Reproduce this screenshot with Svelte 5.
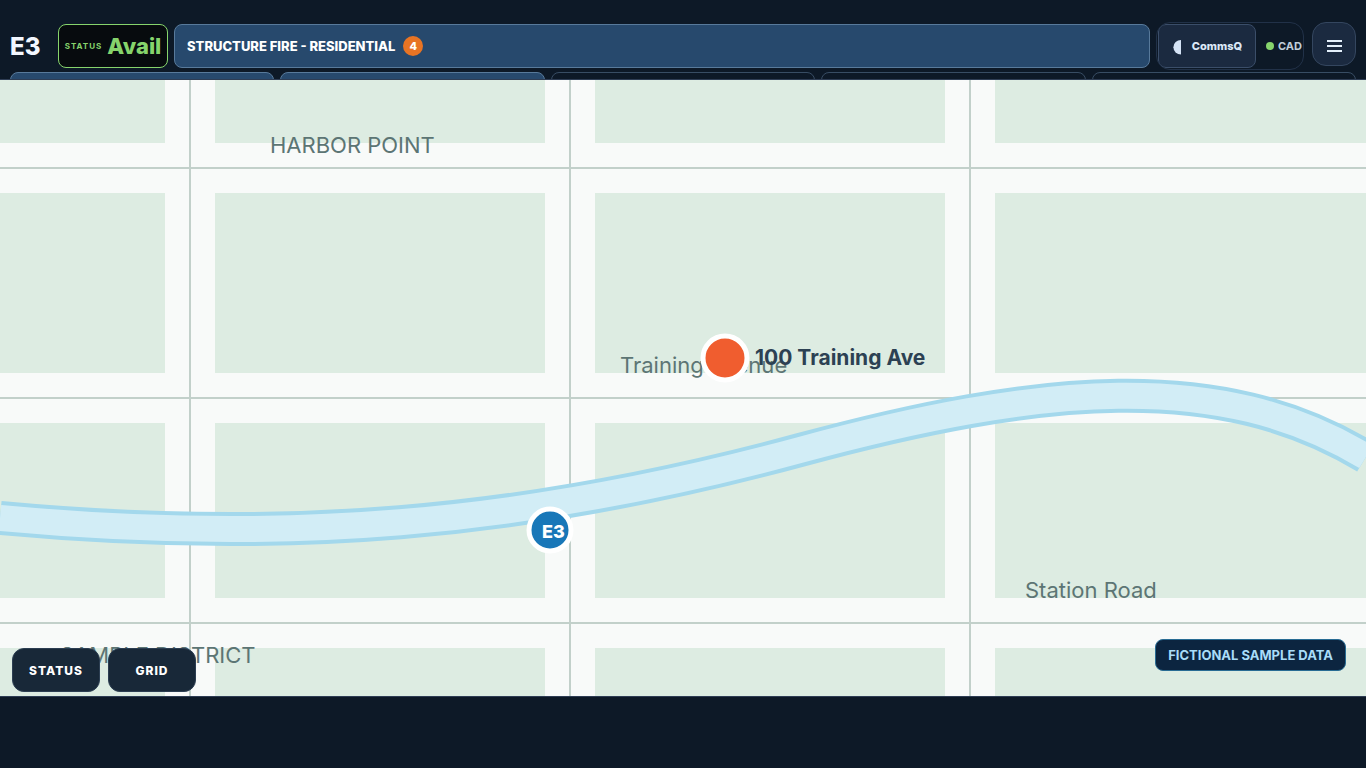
<script lang="ts">
  const unit = 'E3';
  const incident = { title: 'STRUCTURE FIRE - RESIDENTIAL', count: 4 };

  const queue = [
    { id: 1, active: true },
    { id: 2, active: true },
    { id: 3, active: false },
    { id: 4, active: false },
    { id: 5, active: false }
  ];

  const streetsX = [190, 570, 970];
  const streetsY = [88, 318, 543];
  const river = 'M0 438 C280 464 520 446 800 370 C1040 305 1220 288 1366 377';

  const labels = [
    { text: 'HARBOR POINT', x: 270, y: 73 },
    { text: 'Training Avenue', x: 620, y: 293 },
    { text: 'Station Road', x: 1025, y: 518 },
    { text: 'SAMPLE DISTRICT', x: 60, y: 583 }
  ];
</script>

<div class="terminal">
  <header class="topbar">
    <div class="topbar-row">
      <strong class="unit">{unit}</strong>
      <button class="status">
        <span class="status-label">STATUS</span>
        <span class="status-value">Avail</span>
      </button>
      <button class="incident">
        {incident.title}
        <span class="count">{incident.count}</span>
      </button>
      <div class="links">
        <button class="comms">
          <svg width="10" height="16" viewBox="0 0 10 16" aria-hidden="true">
            <path d="M9 1 V15.5 A7.6 7.25 0 0 1 9 1 Z" fill="#d5e3f5" />
          </svg>
          CommsQ
        </button>
        <span class="cad"><i class="dot"></i>CAD</span>
      </div>
      <button class="menu" aria-label="Menu">
        <svg width="16" height="18" viewBox="0 0 16 18" aria-hidden="true">
          <path d="M1 6 H16 M1 11 H16 M1 16 H16" stroke="#e4f0fb" stroke-width="2" />
        </svg>
      </button>
    </div>
    <div class="queue">
      {#each queue as slot (slot.id)}
        <div class="slot" class:active={slot.active}></div>
      {/each}
    </div>
  </header>

  <main class="map">
    <svg class="map-canvas" viewBox="0 0 1366 616" preserveAspectRatio="xMidYMid slice">
      <rect width="1366" height="616" fill="#ddece2" />
      <g stroke="#f8faf9" stroke-width="50">
        {#each streetsX as x}
          <line x1={x} y1="0" x2={x} y2="616" />
        {/each}
        {#each streetsY as y}
          <line x1="0" y1={y} x2="1366" y2={y} />
        {/each}
      </g>
      <g stroke="#c2d0ca" stroke-width="2">
        {#each streetsX as x}
          <line x1={x} y1="0" x2={x} y2="616" />
        {/each}
        {#each streetsY as y}
          <line x1="0" y1={y} x2="1366" y2={y} />
        {/each}
      </g>
      <path d={river} fill="none" stroke="#a3d8ec" stroke-width="34" />
      <path d={river} fill="none" stroke="#d2edf6" stroke-width="26" />
      {#each labels as label}
        <text class="place" x={label.x} y={label.y}>{label.text}</text>
      {/each}
      <circle cx="725" cy="278" r="22" fill="#f05d2f" stroke="#fff" stroke-width="5" />
      <text class="address" x="755" y="285">100 Training Ave</text>
      <circle cx="550" cy="450" r="21" fill="#1877b8" stroke="#fff" stroke-width="5" />
      <text class="marker" x="542" y="458">{unit}</text>
    </svg>

    <div class="map-actions">
      <button>STATUS</button>
      <button>GRID</button>
    </div>
    <div class="notice">FICTIONAL SAMPLE DATA</div>
  </main>

  <footer class="bottombar"></footer>
</div>

<style>
  :global(body) {
    margin: 0;
    background: #0d1927;
    color: #f2f7ff;
    font-family: Inter, Roboto, 'Liberation Sans', sans-serif;
  }

  button {
    font-family: inherit;
    color: inherit;
    cursor: pointer;
    box-sizing: border-box;
  }

  .terminal {
    display: flex;
    flex-direction: column;
    height: 100vh;
  }

  .topbar {
    box-sizing: border-box;
    height: 80px;
    padding: 22px 10px 0;
    border-bottom: 1px solid #2e3d54;
    overflow: hidden;
  }

  .topbar-row {
    display: grid;
    grid-template-columns: 42px 110px 1fr 148px 46px;
    column-gap: 6px;
    align-items: center;
    height: 48px;
  }

  .unit {
    font-size: 24px;
    font-weight: 800;
  }

  .status {
    display: flex;
    align-items: center;
    justify-content: center;
    gap: 5px;
    height: 44px;
    padding: 0;
    background: #070b0e;
    border: 1px solid #86d46c;
    border-radius: 8px;
    color: #86d46c;
  }

  .status-label {
    font-size: 8px;
    font-weight: 700;
    letter-spacing: 1px;
  }

  .status-value {
    font-size: 22px;
    font-weight: 800;
  }

  .incident {
    display: flex;
    align-items: center;
    gap: 8px;
    height: 44px;
    padding: 0 12px;
    background: #27496d;
    border: 1px solid #587a9b;
    border-radius: 8px;
    font-size: 13px;
    font-weight: 800;
    color: #fff;
  }

  .count {
    display: grid;
    place-items: center;
    width: 20px;
    height: 20px;
    border-radius: 50%;
    background: #e87424;
    font-size: 11px;
  }

  .links {
    display: flex;
    align-items: center;
    box-sizing: border-box;
    height: 48px;
    padding: 0 1px;
    border: 1px solid #213148;
    border-radius: 14px;
    overflow: hidden;
    white-space: nowrap;
  }

  .comms {
    display: flex;
    flex: none;
    align-items: center;
    justify-content: center;
    gap: 10px;
    width: 98px;
    height: 44px;
    padding: 0;
    background: #1b2a40;
    border: 1px solid #3b4e69;
    border-radius: 8px;
    color: #dce8f7;
    font-size: 11px;
    font-weight: 800;
  }

  .comms svg {
    position: relative;
    top: 1px;
  }

  .cad {
    display: flex;
    align-items: center;
    gap: 4px;
    padding-left: 10px;
    color: #c0cedb;
    font-size: 11px;
    font-weight: 700;
  }

  .dot {
    width: 8px;
    height: 8px;
    border-radius: 50%;
    background: #86d46c;
  }

  .menu {
    display: grid;
    place-items: center;
    align-self: start;
    width: 44px;
    height: 44px;
    margin-left: 2px;
    padding: 0;
    background: #1b2a40;
    border: 1px solid #34465f;
    border-radius: 14px;
  }

  .queue {
    display: grid;
    grid-template-columns: repeat(5, 1fr);
    gap: 6px;
    margin-top: 2px;
  }

  .slot {
    box-sizing: border-box;
    height: 44px;
    border: 1px solid #384d64;
    border-radius: 8px;
  }

  .slot.active {
    background: #27496d;
    border-color: #587a9b;
  }

  .map {
    position: relative;
    flex: 1;
    min-height: 0;
    background: #ddece2;
  }

  .map-canvas {
    display: block;
    width: 100%;
    height: 100%;
  }

  .place {
    font-size: 22px;
    fill: #5c7574;
  }

  .address {
    font-size: 21px;
    font-weight: 700;
    fill: #2c4153;
  }

  .marker {
    font-size: 18px;
    font-weight: 800;
    fill: #fff;
  }

  .map-actions {
    position: absolute;
    left: 12px;
    bottom: 4px;
    display: flex;
    gap: 8px;
  }

  .map-actions button {
    width: 88px;
    height: 44px;
    padding: 0;
    background: #182838;
    border: 1px solid #2c3e52;
    border-radius: 12px;
    color: #fff;
    font-size: 12px;
    font-weight: 800;
    letter-spacing: 1px;
  }

  .notice {
    position: absolute;
    right: 20px;
    bottom: 25px;
    box-sizing: border-box;
    height: 32px;
    padding: 0 12px;
    background: #0c2540;
    border: 1px solid #286c94;
    border-radius: 8px;
    color: #a9dcf8;
    font-size: 13px;
    font-weight: 700;
    line-height: 30px;
  }

  .bottombar {
    box-sizing: border-box;
    height: 72px;
    border-top: 1px solid #2e3d54;
  }
</style>
